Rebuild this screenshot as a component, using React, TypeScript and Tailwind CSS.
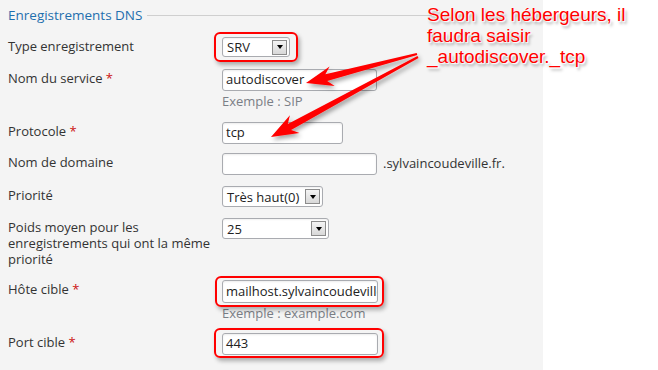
import React from 'react';

type Pt = [number, number];

// builds a tapered red arrow polygon from tail to tip
function arrowPoints(tail: Pt, tip: Pt, head = 26, wing = 10) {
  const dx = tip[0] - tail[0];
  const dy = tip[1] - tail[1];
  const len = Math.hypot(dx, dy);
  const ux = dx / len;
  const uy = dy / len;
  const nx = -uy;
  const ny = ux;
  const neck: Pt = [tip[0] - ux * (head - 6), tip[1] - uy * (head - 6)];
  const back: Pt = [tip[0] - ux * head, tip[1] - uy * head];
  const pts: Pt[] = [
    [tail[0] + nx * 1, tail[1] + ny * 1],
    [neck[0] + nx * 3.5, neck[1] + ny * 3.5],
    [back[0] + nx * wing, back[1] + ny * wing],
    tip,
    [back[0] - nx * wing, back[1] - ny * wing],
    [neck[0] - nx * 3.5, neck[1] - ny * 3.5],
    [tail[0] - nx * 1, tail[1] - ny * 1],
  ];
  return pts.map((p) => `${p[0].toFixed(1)},${p[1].toFixed(1)}`).join(' ');
}

function Highlight({ className }: { className: string }) {
  return (
    <span
      className={`pointer-events-none absolute rounded-[6px] border-2 border-[#ff0000] shadow-[2px_3px_4px_rgba(0,0,0,0.3)] ${className}`}
    />
  );
}

function Select({ value, w, h }: { value: string; w: string; h: string }) {
  return (
    <div
      className={`flex items-center justify-between rounded-[3px] border border-[#a9abb0] bg-white pl-[4px] pr-[2px] shadow-[inset_0_1px_2px_rgba(0,0,0,0.06)] ${w} ${h}`}
    >
      <span className="text-[13px] leading-4 text-[#222]">{value}</span>
      <span className="flex h-[15px] w-[15px] items-center justify-center border border-[#8c8c8c] bg-gradient-to-b from-[#f4f4f4] to-[#d8d8d8]">
        <span className="h-0 w-0 border-x-[3.5px] border-t-[4px] border-x-transparent border-t-black" />
      </span>
    </div>
  );
}

function Input({ value, w, h = 'h-[22px]' }: { value?: string; w: string; h?: string }) {
  return (
    <div
      className={`flex items-center overflow-hidden whitespace-nowrap rounded-[3px] border border-[#a9abb0] bg-white pl-[3px] text-[13px] text-[#222] shadow-[inset_0_1px_2px_rgba(0,0,0,0.08)] ${w} ${h}`}
    >
      {value}
    </div>
  );
}

function Label({ text, required }: { text: React.ReactNode; required?: boolean }) {
  return (
    <div className="w-[214px] shrink-0 pt-[1px] pr-[2px] text-[13px] leading-4 text-[#333]">
      {text}
      {required && <span className="text-[#cc1111]"> *</span>}
    </div>
  );
}

function Hint({ text }: { text: string }) {
  return <div className="mt-[2px] text-[13px] leading-4 text-[#7b7f86]">{text}</div>;
}

export default function App() {
  return (
    <div className="relative h-[370px] w-[658px] overflow-hidden bg-white font-['Open_Sans',sans-serif]">
      <div className="h-full w-[543px] bg-[#f4f4f4] pl-[8px] pt-[7px]">
        <div className="flex h-4 items-center gap-[5px]">
          <span className="text-[13.5px] leading-4 text-[#1f6fae]">Enregistrements DNS</span>
          <span className="h-px w-[285px] bg-[#cfcfcf]" />
        </div>

        <div className="mt-[14px] flex">
          <Label text="Type enregistrement" />
          <div className="relative">
            <Select value="SRV" w="w-[68px]" h="h-[20px]" />
            <Highlight className="-inset-x-[8px] -inset-y-[5px]" />
          </div>
        </div>

        <div className="mt-[12px] flex">
          <Label text="Nom du service" required />
          <div>
            <Input value="autodiscover" w="w-[155px]" />
            <Hint text="Exemple : SIP" />
          </div>
        </div>

        <div className="mt-[13px] flex">
          <Label text="Protocole" required />
          <Input value="tcp" w="w-[121px]" />
        </div>

        <div className="mt-[9px] flex">
          <Label text="Nom de domaine" />
          <div className="flex items-center gap-[6px]">
            <Input w="w-[155px]" />
            <span className="text-[13px] text-[#333]">.sylvaincoudeville.fr.</span>
          </div>
        </div>

        <div className="mt-[11px] flex">
          <Label text="Priorité" />
          <Select value="Très haut(0)" w="w-[101px]" h="h-[21px]" />
        </div>

        <div className="mt-[11px] flex">
          <Label text="Poids moyen pour les enregistrements qui ont la même priorité" />
          <Select value="25" w="w-[107px]" h="h-[21px]" />
        </div>

        <div className="mt-[13px] flex">
          <Label text="Hôte cible" required />
          <div>
            <div className="relative">
              <Input value="mailhost.sylvaincoudeville" w="w-[156px]" h="h-[23px]" />
              <Highlight className="-left-[7px] -right-[6px] -top-[4px] -bottom-[4px]" />
            </div>
            <Hint text="Exemple : example.com" />
          </div>
        </div>

        <div className="mt-[12px] flex">
          <Label text="Port cible" required />
          <div className="relative">
            <Input value="443" w="w-[156px]" />
            <Highlight className="-left-[8px] -right-[6px] -top-[5px] -bottom-[3px]" />
          </div>
        </div>
      </div>

      <svg className="pointer-events-none absolute left-0 top-0" width="658" height="370">
        <defs>
          <filter id="sh" x="-20%" y="-20%" width="140%" height="160%">
            <feDropShadow dx="2" dy="3" stdDeviation="2" floodColor="#000" floodOpacity="0.35" />
          </filter>
        </defs>
        <g filter="url(#sh)" fill="#ff0000">
          <polygon points={arrowPoints([417, 54], [306, 83], 27, 10)} />
          <polygon points={arrowPoints([418, 57], [271, 137], 27, 10)} />
        </g>
      </svg>

      <div className="absolute left-[427px] top-[4px] font-['Liberation_Sans',Arial,sans-serif] text-[19px] leading-[21px] text-[#ff0000] [text-shadow:0_0_1px_#fff,0_0_2px_#fff,1px_1px_1px_#fff,2px_3px_3px_rgba(0,0,0,0.35)]">
        Selon les hébergeurs, il
        <br />
        faudra saisir
        <br />
        _autodiscover._tcp
      </div>
    </div>
  );
}
